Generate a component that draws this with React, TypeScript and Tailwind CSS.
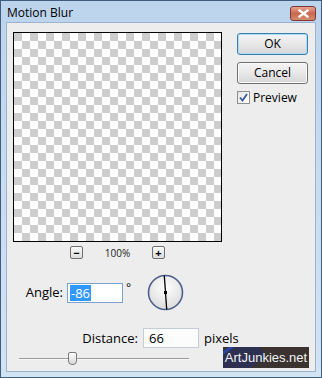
import React from "react";

const font = { fontFamily: '"Open Sans", "Noto Sans", Arial, sans-serif' };

function DlgBtn({ label, primary }: { label: string; primary?: boolean }) {
  return (
    <button
      className={[
        "w-[71px] h-[22px] rounded-[3px] border text-[12px] text-black leading-none",
        "bg-gradient-to-b from-[#f4f4f4] via-[#e8e8e8] to-[#d6d6d6]",
        primary
          ? "border-[#3c7fb1] shadow-[inset_0_0_0_1px_#a9dcf5]"
          : "border-[#707070] shadow-[inset_0_0_0_1px_#fbfbfb]",
      ].join(" ")}
    >
      {label}
    </button>
  );
}

function ZoomBtn({ sign }: { sign: string }) {
  return (
    <div className="w-[13px] h-[13px] rounded-[2px] border border-[#6f6f6f] bg-gradient-to-b from-[#fafafa] to-[#dcdcdc] flex items-center justify-center text-[11px] leading-none text-black font-bold">
      {sign}
    </div>
  );
}

function AngleDial() {
  // -86 deg: almost vertical, top leaning left
  return (
    <svg width="37" height="37" viewBox="0 0 37 37">
      <defs>
        <radialGradient id="dial" cx="50%" cy="35%" r="65%">
          <stop offset="0%" stopColor="#ffffff" />
          <stop offset="100%" stopColor="#dcdcdc" />
        </radialGradient>
      </defs>
      <circle cx="18.5" cy="18.5" r="17" fill="url(#dial)" stroke="#4d5f8c" strokeWidth="1.6" />
      <line x1="17.3" y1="1.5" x2="19.7" y2="35.5" stroke="#000" strokeWidth="1.3" />
      <rect x="17" y="17" width="3" height="3" fill="#000" />
    </svg>
  );
}

export default function App() {
  return (
    <div
      className="relative w-[322px] h-[378px] border border-[#3e5d80] bg-gradient-to-b from-[#bcd4ec] via-[#c9dcf0] to-[#d2e3f4] flex flex-col overflow-hidden"
      style={font}
    >
      {/* Title bar */}
      <div className="h-[21px] flex items-center justify-between pl-[6px] pr-[5px] shrink-0">
        <span className="text-[12px] text-black leading-none mt-[2px]">Motion Blur</span>
        <div className="mt-[4px] w-[26px] h-[15px] rounded-[3px] border border-[#7a3a3a] bg-gradient-to-b from-[#e9a58e] via-[#c9674f] to-[#d68a6b] flex items-center justify-center">
          <svg width="11" height="9" viewBox="0 0 11 9">
            <path d="M1.5 1.5 L9.5 7.5 M9.5 1.5 L1.5 7.5" stroke="#ffffff" strokeWidth="2.4" strokeLinecap="square" />
          </svg>
        </div>
      </div>

      {/* Client area */}
      <div className="flex-1 mx-[5px] mb-[5px] border border-[#9bb3cf] bg-[#ededed] flex flex-col pl-[6px] pt-[9px]">
        <div className="flex">
          <div className="w-[209px] h-[210px] border border-black bg-[image:conic-gradient(#ffffff_25%,#cdcdcd_0_50%,#ffffff_0_75%,#cdcdcd_0)] bg-size-[16px_16px]" />
          <div className="ml-[15px] mt-[1px] flex flex-col">
            <DlgBtn label="OK" primary />
            <div className="h-[7px]" />
            <DlgBtn label="Cancel" />
            <div className="mt-[7px] flex items-center">
              <div className="w-[13px] h-[13px] border border-[#8f8f8f] bg-gradient-to-br from-[#e6e6e6] to-[#ffffff] flex items-center justify-center">
                <svg width="9" height="9" viewBox="0 0 9 9">
                  <path d="M1 4.5 L3.5 7.5 L8 1" fill="none" stroke="#3a5a9c" strokeWidth="1.8" />
                </svg>
              </div>
              <span className="ml-[3px] text-[12px] text-black leading-none">Preview</span>
            </div>
          </div>
        </div>

        {/* Zoom controls */}
        <div className="w-[209px] mt-[4px] flex items-center justify-center">
          <ZoomBtn sign="−" />
          <span className="w-[69px] text-center text-[10px] text-[#222] leading-none">100%</span>
          <ZoomBtn sign="+" />
        </div>

        {/* Angle row */}
        <div className="mt-[15px] -ml-[6px] flex items-center">
          <span className="w-[56px] text-right text-[13px] text-black leading-none">Angle:</span>
          <div className="ml-[4px] w-[56px] h-[20px] border border-[#7da2ce] bg-white flex items-center pl-[2px]">
            <span className="bg-[#3399ff] text-white text-[13px] leading-[16px] px-[1px]">-86</span>
          </div>
          <span className="w-[24px] pl-[3px] text-[12px] text-black self-start mt-[8px] leading-none">°</span>
          <AngleDial />
        </div>

        {/* Distance row */}
        <div className="mt-[17px] -ml-[6px] flex items-center">
          <span className="w-[131px] text-right text-[13px] text-black leading-none">Distance:</span>
          <div className="ml-[5px] w-[56px] h-[20px] border border-[#c5ccd6] bg-[#fcfcfc] flex items-center pl-[5px]">
            <span className="text-[13px] text-black leading-none">66</span>
          </div>
          <span className="ml-[5px] text-[13px] text-black leading-none">pixels</span>
        </div>

        {/* Slider */}
        <div className="mt-[4px] ml-[6px] relative w-[170px] h-[13px] flex items-center">
          <div className="w-full h-[2px] border-t border-[#9a9a9a] border-b border-b-[#f8f8f8]" />
          <div className="absolute left-[49px] top-0 w-[9px] h-[13px] rounded-b-[4px] rounded-t-[2px] border border-[#7a7a7a] bg-gradient-to-b from-[#fdfdfd] to-[#d8d8d8]" />
        </div>
      </div>

      {/* Watermark */}
      <div className="absolute left-[222px] top-[346px] w-[86px] h-[21px] overflow-hidden bg-[#3a3330] flex items-center justify-center">
        <div className="absolute -left-[14px] top-[14px] w-[50px] h-[30px] bg-[#2d3050] -rotate-[35deg] origin-top-left border-t-[3px] border-[#2747a0]" />
        <span className="relative text-[13px] text-[#f2f2f2] leading-none" style={{ fontFamily: '"Liberation Sans", Arial, sans-serif' }}>
          ArtJunkies.net
        </span>
      </div>
    </div>
  );
}
